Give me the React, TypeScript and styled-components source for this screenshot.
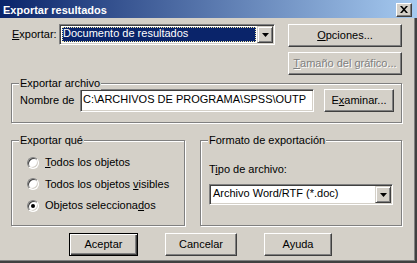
import { FC, ReactNode } from 'react';
import styled, { createGlobalStyle } from 'styled-components';

const GlobalStyle = createGlobalStyle`
  html, body {
    margin: 0;
    padding: 0;
    background: #d4d0c8;
  }
  body {
    font-family: 'Liberation Sans', Arial, sans-serif;
    font-size: 11px;
    color: #000;
  }
`;

const Window = styled.div`
  width: 417px;
  height: 263px;
  box-sizing: border-box;
  background: #d4d0c8;
  box-shadow: inset -1px -1px 0 #404040, inset -2px -2px 0 #404040, inset -3px -3px 0 #808080;
  display: flex;
  flex-direction: column;
  overflow: hidden;
`;

const TitleBar = styled.div`
  height: 18px;
  flex: none;
  display: flex;
  align-items: center;
  justify-content: space-between;
  padding: 0 5px 0 3px;
  background: linear-gradient(to right, #0a246a, #a6caf0);
`;

const TitleText = styled.div`
  color: #fff;
  font-weight: 700;
  font-size: 11px;
  line-height: 18px;
  padding-top: 1px;
`;

const CloseButton = styled.div`
  width: 16px;
  height: 14px;
  box-sizing: border-box;
  background: #d4d0c8;
  border: 1px solid;
  border-color: #fff #404040 #404040 #fff;
  box-shadow: inset -1px -1px 0 #808080;
  display: flex;
  align-items: center;
  justify-content: center;
  margin-top: 1px;
`;

const Body = styled.div`
  flex: 1;
  display: flex;
  flex-direction: column;
  padding: 6px 15px 0 11px;
`;

const TopSection = styled.div`
  display: flex;
  justify-content: space-between;
  align-items: flex-start;
`;

const ExportRow = styled.div`
  display: flex;
  align-items: center;
  padding-left: 1px;
`;

const Label = styled.span<{ width?: number }>`
  display: inline-block;
  width: ${({ width }) => (width ? `${width}px` : 'auto')};
  line-height: 13px;
  white-space: nowrap;
`;

const Key = styled.span`
  text-decoration: underline;
  text-underline-offset: 1px;
`;

const Combo = styled.div<{ width: number }>`
  width: ${({ width }) => width}px;
  height: 21px;
  box-sizing: border-box;
  background: #fff;
  border: 1px solid;
  border-color: #808080 #fff #fff #808080;
  box-shadow: inset 1px 1px 0 #404040, inset -1px -1px 0 #d4d0c8;
  padding: 1px;
  display: flex;
`;

const ComboValue = styled.div<{ selected?: boolean }>`
  flex: 1;
  margin: 1px;
  padding-left: 1px;
  line-height: 13px;
  white-space: nowrap;
  overflow: hidden;
  color: ${({ selected }) => (selected ? '#fff' : '#000')};
  background: ${({ selected }) => (selected ? '#0a246a' : 'transparent')};
  outline: ${({ selected }) => (selected ? '1px dotted #f4e9a8' : 'none')};
  outline-offset: -1px;
`;

const ArrowButton = styled.div`
  width: 16px;
  height: 17px;
  flex: none;
  box-sizing: border-box;
  background: #d4d0c8;
  border: 1px solid;
  border-color: #d4d0c8 #404040 #404040 #d4d0c8;
  box-shadow: inset 1px 1px 0 #fff, inset -1px -1px 0 #808080;
  display: flex;
  align-items: center;
  justify-content: center;
`;

const ButtonColumn = styled.div`
  display: flex;
  flex-direction: column;
  gap: 5px;
`;

const Button = styled.div<{ width: number; primary?: boolean; disabled?: boolean }>`
  width: ${({ width }) => width}px;
  height: 23px;
  box-sizing: border-box;
  background: #d4d0c8;
  border: 1px solid;
  border-color: ${({ primary }) => (primary ? '#000' : '#fff #404040 #404040 #fff')};
  box-shadow: ${({ primary }) =>
    primary
      ? 'inset 1px 1px 0 #fff, inset -1px -1px 0 #404040, inset -2px -2px 0 #808080'
      : 'inset -1px -1px 0 #808080'};
  display: flex;
  align-items: center;
  justify-content: center;
  line-height: 13px;
  white-space: nowrap;
  color: ${({ disabled }) => (disabled ? '#808080' : '#000')};
  text-shadow: ${({ disabled }) => (disabled ? '1px 1px 0 #fff' : 'none')};
`;

const Group = styled.div<{ width?: number; height: number }>`
  position: relative;
  box-sizing: border-box;
  width: ${({ width }) => (width ? `${width}px` : 'auto')};
  height: ${({ height }) => height}px;
  border: 1px solid #808080;
  box-shadow: inset 1px 1px 0 #fff, 1px 1px 0 #fff;
`;

const Legend = styled.span`
  position: absolute;
  top: -7px;
  left: 7px;
  padding: 0 1px;
  background: #d4d0c8;
  line-height: 13px;
  white-space: nowrap;
`;

const FileGroup = styled(Group)`
  margin-top: 8px;
  display: flex;
  align-items: flex-start;
  padding: 5px 7px 0 8px;
`;

const FileRow = styled.div`
  display: flex;
  align-items: center;
  flex: 1;
`;

const TextField = styled.div`
  width: 234px;
  height: 23px;
  box-sizing: border-box;
  background: #fff;
  border: 1px solid;
  border-color: #808080 #fff #fff #808080;
  box-shadow: inset 1px 1px 0 #404040, inset -1px -1px 0 #d4d0c8;
  padding: 3px 2px 0 2px;
  line-height: 13px;
  white-space: nowrap;
  overflow: hidden;
  margin-right: 10px;
`;

const GroupsRow = styled.div`
  display: flex;
  gap: 15px;
  margin-top: 17px;
`;

const RadioList = styled.div`
  display: flex;
  flex-direction: column;
  gap: 8.5px;
  padding: 15px 0 0 15px;
`;

const RadioRow = styled.div`
  display: flex;
  align-items: center;
  gap: 6px;
  height: 13px;
`;

const RadioCircle = styled.div<{ checked?: boolean }>`
  width: 12px;
  height: 12px;
  box-sizing: border-box;
  border-radius: 50%;
  background: #fff;
  border: 1px solid;
  border-color: #808080 #fff #fff #808080;
  box-shadow: inset 1px 1px 0 #404040, inset -1px -1px 0 #d4d0c8;
  display: flex;
  align-items: center;
  justify-content: center;

  &::after {
    content: '';
    display: ${({ checked }) => (checked ? 'block' : 'none')};
    width: 4px;
    height: 4px;
    border-radius: 50%;
    background: #000;
  }
`;

const FormatBody = styled.div`
  display: flex;
  flex-direction: column;
  gap: 8px;
  padding: 22px 0 0 8px;
`;

const ActionRow = styled.div`
  display: flex;
  gap: 27px;
  margin-top: 7px;
  padding-left: 58px;
`;

const Arrow: FC = () => (
  <svg width="7" height="4" viewBox="0 0 7 4">
    <path d="M0 0h7L3.5 4z" fill="#000" />
  </svg>
);

const Radio: FC<{ checked?: boolean; children: ReactNode }> = ({ checked, children }) => (
  <RadioRow>
    <RadioCircle checked={checked} />
    <Label>{children}</Label>
  </RadioRow>
);

export default function App() {
  return (
    <>
      <GlobalStyle />
      <Window>
        <TitleBar>
          <TitleText>Exportar resultados</TitleText>
          <CloseButton>
            <svg width="8" height="7" viewBox="0 0 8 7">
              <path d="M0 0h2l2 2.2L6 0h2L5 3.5 8 7H6L4 4.8 2 7H0l3-3.5z" fill="#000" />
            </svg>
          </CloseButton>
        </TitleBar>

        <Body>
          <TopSection>
            <ExportRow>
              <Label width={47}>
                <Key>E</Key>xportar:
              </Label>
              <Combo width={216}>
                <ComboValue selected>Documento de resultados</ComboValue>
                <ArrowButton>
                  <Arrow />
                </ArrowButton>
              </Combo>
            </ExportRow>
            <ButtonColumn>
              <Button width={114}>
                <Key>O</Key>pciones...
              </Button>
              <Button width={114} disabled>
                <Key>T</Key>amaño del gráfico...
              </Button>
            </ButtonColumn>
          </TopSection>

          <FileGroup height={40}>
            <Legend>Exportar archivo</Legend>
            <FileRow>
              <Label width={60}>Nombre de</Label>
              <TextField>C:\ARCHIVOS DE PROGRAMA\SPSS\OUTP</TextField>
              <Button width={70}>
                E<Key>x</Key>aminar...
              </Button>
            </FileRow>
          </FileGroup>

          <GroupsRow>
            <Group width={174} height={86}>
              <Legend>Exportar qué</Legend>
              <RadioList>
                <Radio>
                  <Key>T</Key>odos los objetos
                </Radio>
                <Radio>
                  Todos los objetos <Key>v</Key>isibles
                </Radio>
                <Radio checked>
                  Objetos selecciona<Key>d</Key>os
                </Radio>
              </RadioList>
            </Group>
            <Group width={202} height={86}>
              <Legend>Formato de exportación</Legend>
              <FormatBody>
                <Label>
                  T<Key>i</Key>po de archivo:
                </Label>
                <Combo width={184}>
                  <ComboValue>Archivo Word/RTF (*.doc)</ComboValue>
                  <ArrowButton>
                    <Arrow />
                  </ArrowButton>
                </Combo>
              </FormatBody>
            </Group>
          </GroupsRow>

          <ActionRow>
            <Button width={69} primary>
              Aceptar
            </Button>
            <Button width={72}>Cancelar</Button>
            <Button width={68}>Ayuda</Button>
          </ActionRow>
        </Body>
      </Window>
    </>
  );
}
